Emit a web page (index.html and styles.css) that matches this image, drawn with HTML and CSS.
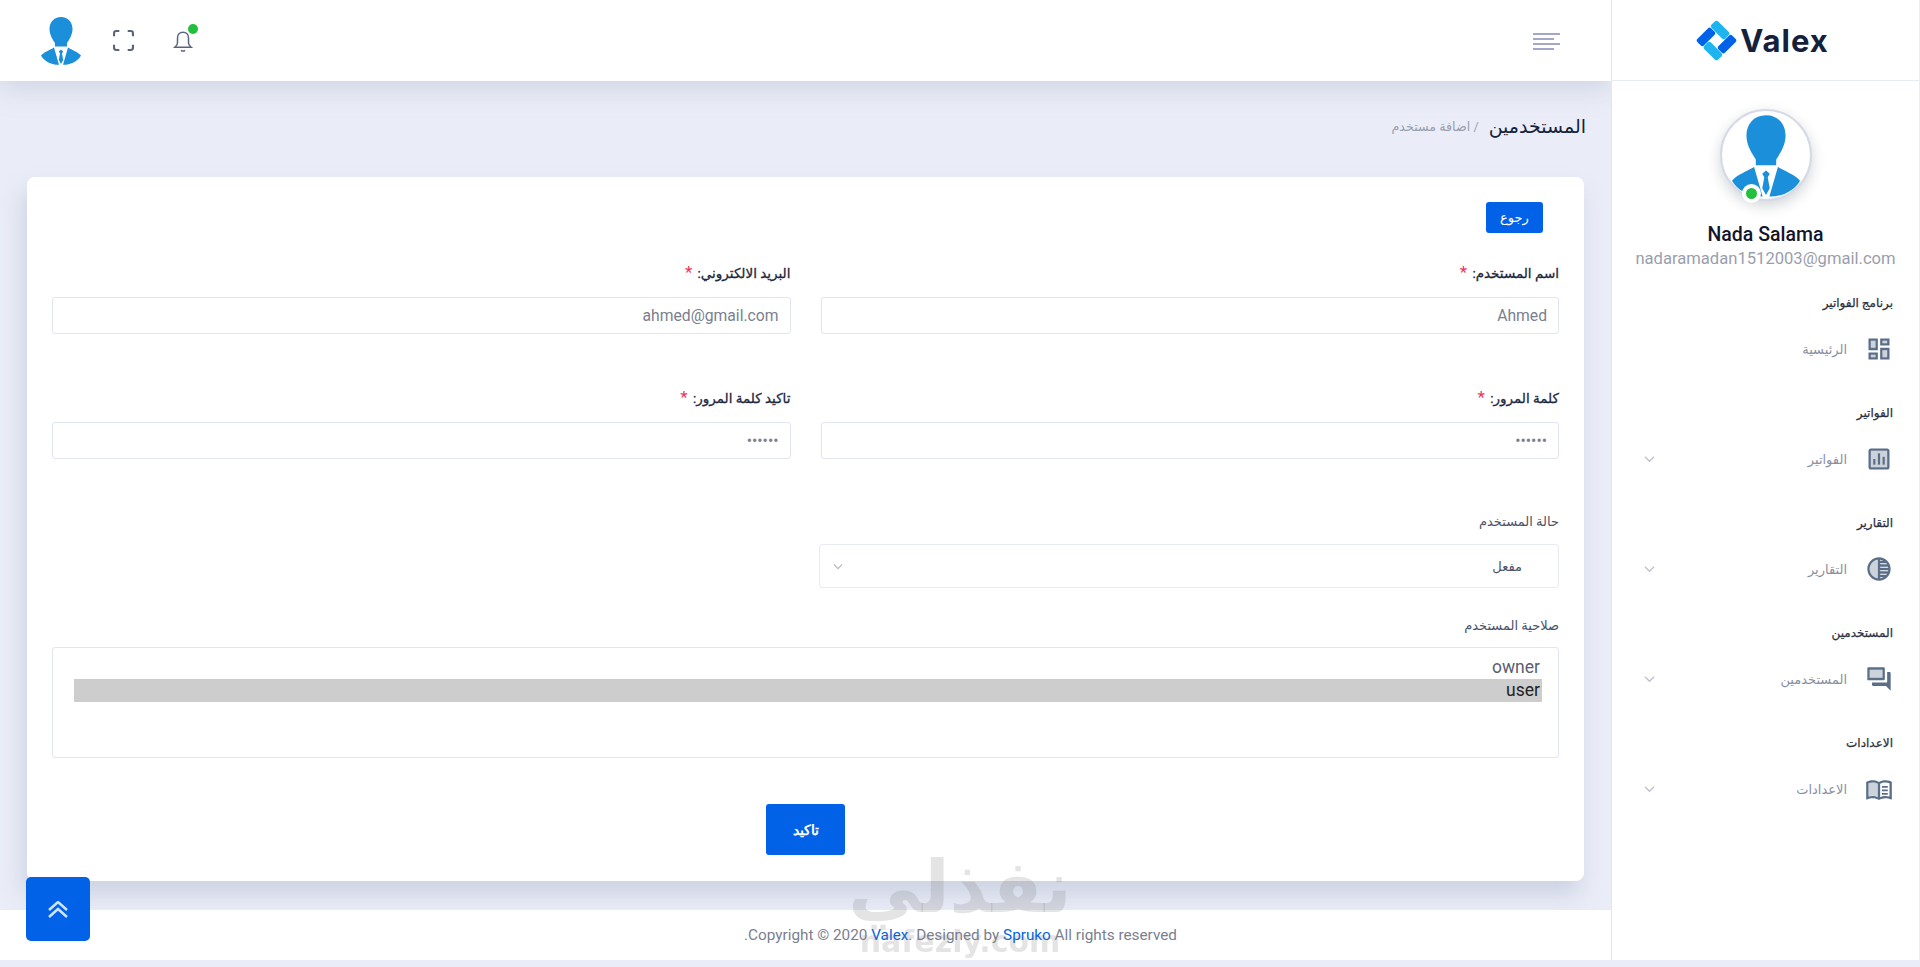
FILE: index.html
```html
<!DOCTYPE html>
<html lang="ar" dir="rtl">
<head>
    <meta charset="UTF-8">
    <title>اضافة مستخدم</title>
    <link rel="stylesheet" href="styles.css">
</head>
<body>
    <svg class="defs" width="0" height="0">
        <symbol id="person" viewBox="0 0 40 48">
            <path d="M20 0C27 0 31.5 5 31.5 12C31.5 18 28 23 26 26V29.5H14V26C12 23 8.5 18 8.5 12C8.5 5 13 0 20 0Z"/>
            <path d="M0 38.5C3 35 9 33 13 30.5L18 47.8C10 48 3 44 0 38.5Z"/>
            <path d="M40 38.5C37 35 31 33 27 30.5L22 47.8C30 48 37 44 40 38.5Z"/>
            <path d="M20 32.5L17.8 34.5L19 36.5L17.8 43L20 47L22.2 43L21 36.5L22.2 34.5Z"/>
        </symbol>
    </svg>

    <div class="page">
        <aside class="sidebar">
            <div class="brand">
                <svg class="brand-mark" viewBox="-1 -1 42 42">
                    <g transform="rotate(45 20 20)">
                        <rect fill="#1eb4f0" x="5" y="5" width="20" height="9.5" rx="2.5"/>
                        <rect fill="#0162e8" x="25.5" y="5" width="9.5" height="20" rx="2.5"/>
                        <rect fill="#1eb4f0" x="15" y="25.5" width="20" height="9.5" rx="2.5"/>
                        <rect fill="#0162e8" x="5" y="15" width="9.5" height="20" rx="2.5"/>
                    </g>
                </svg>
                <span class="brand-name">Valex</span>
            </div>

            <div class="profile">
                <div class="profile-pic">
                    <svg class="profile-person"><use href="#person"/></svg>
                    <span class="online-dot"></span>
                </div>
                <h4 class="profile-name">Nada Salama</h4>
                <span class="profile-mail">nadaramadan1512003@gmail.com</span>
            </div>

            <ul class="side-menu">
                <li class="side-cat">برنامج الفواتير</li>
                <li class="side-item">
                    <svg class="side-icon" viewBox="0 0 24 24"><path opacity=".3" d="M5 5h4v6H5zm10 8h4v6h-4zM5 17h4v2H5zM15 5h4v2h-4z"/><path d="M3 13h8V3H3v10zm2-8h4v6H5V5zm8 16h8V11h-8v10zm2-8h4v6h-4v-6zM13 3v6h8V3h-8zm6 4h-4V5h4v2zM3 21h8v-6H3v6zm2-4h4v2H5v-2z"/></svg>
                    <span class="side-label">الرئيسية</span>
                </li>
                <li class="side-cat">الفواتير</li>
                <li class="side-item">
                    <svg class="side-icon" viewBox="0 0 24 24"><path opacity=".3" d="M5 5v14h14V5H5zm4 12H7v-5h2v5zm4 0h-2V7h2v10zm4 0h-2v-7h2v7z"/><path d="M3 5v14c0 1.1.9 2 2 2h14c1.1 0 2-.9 2-2V5c0-1.1-.9-2-2-2H5c-1.1 0-2 .9-2 2zm2 0h14v14H5V5zm2 7h2v5H7zm4-5h2v10h-2zm4 3h2v7h-2z"/></svg>
                    <span class="side-label">الفواتير</span>
                    <svg class="side-arrow" viewBox="0 0 12 8"><path d="M1 1.5L6 6.5L11 1.5"/></svg>
                </li>
                <li class="side-cat">التقارير</li>
                <li class="side-item">
                    <svg class="side-icon" viewBox="0 0 24 24"><path opacity=".3" d="M11 4.07C7.05 4.56 4 7.92 4 12s3.06 7.44 7 7.93z"/><path d="M12 2C6.48 2 2 6.48 2 12s4.48 10 10 10 10-4.48 10-10S17.52 2 12 2zm-1 17.93c-3.94-.49-7-3.85-7-7.93s3.05-7.44 7-7.93v15.86zm2-15.86c1.03.13 2 .45 2.87.93H13v-.93zM13 7h5.24c.25.31.48.65.68 1H13V7zm0 3h6.74c.08.33.15.66.19 1H13v-1zm0 9.93V19h2.87c-.87.48-1.84.8-2.87.93zM18.24 17H13v-1h5.92c-.2.35-.43.69-.68 1zm1.5-3H13v-1h6.93c-.04.34-.11.67-.19 1z"/></svg>
                    <span class="side-label">التقارير</span>
                    <svg class="side-arrow" viewBox="0 0 12 8"><path d="M1 1.5L6 6.5L11 1.5"/></svg>
                </li>
                <li class="side-cat">المستخدمين</li>
                <li class="side-item">
                    <svg class="side-icon" viewBox="0 0 24 24"><path opacity=".3" d="M15 11V4H4v7z"/><path d="M21 6h-2v9H6v2c0 .55.45 1 1 1h11l4 4V7c0-.55-.45-1-1-1zm-5 7c.55 0 1-.45 1-1V3c0-.55-.45-1-1-1H3c-.55 0-1 .45-1 1v10h13zM4 11V4h11v7z"/></svg>
                    <span class="side-label">المستخدمين</span>
                    <svg class="side-arrow" viewBox="0 0 12 8"><path d="M1 1.5L6 6.5L11 1.5"/></svg>
                </li>
                <li class="side-cat">الاعدادات</li>
                <li class="side-item">
                    <svg class="side-icon" viewBox="0 0 24 24"><path opacity=".3" d="M11 7.5C9.5 6.7 7.7 6.3 6 6.3c-1.1 0-2.1.1-3 .5v11.5c.9-.3 1.9-.5 3-.5 1.7 0 3.5.4 5 1.2z"/><path d="M21 5c-1.11-.35-2.33-.5-3.5-.5-1.95 0-4.05.4-5.5 1.5-1.45-1.1-3.55-1.5-5.5-1.5S2.45 4.9 1 6v14.65c0 .25.25.5.5.5.1 0 .15-.05.25-.05C3.1 20.45 5.05 20 6.5 20c1.95 0 4.05.4 5.5 1.5 1.35-.85 3.8-1.5 5.5-1.5 1.65 0 3.35.3 4.75 1.05.1.05.15.05.25.05.25 0 .5-.25.5-.5V6c-.6-.45-1.25-.75-2-1zM11 19c-1.3-.6-3-1-4.5-1-1.2 0-2.4.15-3.5.5V7c1.1-.35 2.3-.5 3.5-.5 1.5 0 3.2.4 4.5 1zm10-.5c-1.1-.35-2.3-.5-3.5-.5-1.7 0-3.3.4-4.5 1V7.5c1.2-.6 2.8-1 4.5-1 1.2 0 2.4.15 3.5.5v11.5zM14.5 9.5h5V11h-5zm0 3h5V14h-5zm0 3h5V17h-5z"/></svg>
                    <span class="side-label">الاعدادات</span>
                    <svg class="side-arrow" viewBox="0 0 12 8"><path d="M1 1.5L6 6.5L11 1.5"/></svg>
                </li>
            </ul>
        </aside>

        <div class="main">
            <header class="topbar">
                <button class="menu-toggle" aria-label="menu">
                    <span class="bar bar-long"></span>
                    <span class="bar bar-mid"></span>
                    <span class="bar bar-long"></span>
                    <span class="bar bar-mid"></span>
                </button>
                <div class="top-actions">
                    <span class="bell">
                        <svg viewBox="0 0 24 24"><path d="M12 3.2C8.7 3.2 6.5 5.7 6.5 9V14C6.5 16 5.2 17 3.8 18.2H20.2C18.8 17 17.5 16 17.5 14V9C17.5 5.7 15.3 3.2 12 3.2Z"/><path d="M10 21.3C11 22.1 13 22.1 14 21.3"/></svg>
                        <span class="bell-dot"></span>
                    </span>
                    <svg class="fullscreen" viewBox="0 0 20 20"><path d="M1 6V3C1 1.9 1.9 1 3 1H6M14 1H17C18.1 1 19 1.9 19 3V6M19 14V17C19 18.1 18.1 19 17 19H14M6 19H3C1.9 19 1 18.1 1 17V14"/></svg>
                    <svg class="top-person"><use href="#person"/></svg>
                </div>
            </header>

            <div class="content">
                <div class="breadcrumb">
                    <h4 class="crumb-title">المستخدمين</h4>
                    <span class="crumb-sub">/ اضافة مستخدم</span>
                </div>

                <div class="card">
                    <a class="btn btn-back" href="#">رجوع</a>
                    <form class="user-form">
                        <div class="form-row">
                            <div class="field">
                                <label>اسم المستخدم: <span class="req">*</span></label>
                                <input type="text" value="Ahmed">
                            </div>
                            <div class="field">
                                <label>البريد الالكتروني: <span class="req">*</span></label>
                                <input type="text" value="ahmed@gmail.com">
                            </div>
                        </div>
                        <div class="form-row">
                            <div class="field">
                                <label>كلمة المرور: <span class="req">*</span></label>
                                <input type="password" value="123456">
                            </div>
                            <div class="field">
                                <label>تاكيد كلمة المرور: <span class="req">*</span></label>
                                <input type="password" value="123456">
                            </div>
                        </div>
                        <div class="form-row">
                            <div class="field">
                                <label class="plain-label">حالة المستخدم</label>
                                <div class="select-box">
                                    <span>مفعل</span>
                                    <svg class="select-arrow" viewBox="0 0 12 8"><path d="M1 1.5L6 6.5L11 1.5"/></svg>
                                </div>
                            </div>
                            <div class="field"></div>
                        </div>
                        <div class="role-field">
                            <label class="plain-label">صلاحية المستخدم</label>
                            <div class="role-list">
                                <div class="role-option">owner</div>
                                <div class="role-option role-selected">user</div>
                            </div>
                        </div>
                        <div class="form-actions">
                            <button class="btn btn-confirm" type="button">تاكيد</button>
                        </div>
                    </form>
                </div>
            </div>

            <footer class="footer">
                <span dir="ltr">.Copyright © 2020 <a href="#">Valex</a>. Designed by <a href="#">Spruko</a> All rights reserved</span>
            </footer>
        </div>
    </div>

    <a class="back-top" href="#">
        <svg viewBox="0 0 20 17"><path d="M1 9L10 1L19 9M1 16L10 8L19 16"/></svg>
    </a>

    <div class="watermark">
        <span class="mark-ar">نفذلي</span>
        <span class="mark-en">nafezly.com</span>
    </div>
</body>
</html>
```

FILE: styles.css
```css
* { box-sizing: border-box; }
html, body { margin: 0; height: 100%; }
body { background: #eaedf7; font-family: Roboto, "Liberation Sans", "DejaVu Sans", sans-serif; color: #1c273c; overflow: hidden; }
ul { list-style: none; margin: 0; padding: 0; }
a { text-decoration: none; color: #0162e8; }
.defs { position: absolute; }

.page { display: flex; height: 960px; }

/* sidebar */
.sidebar { width: 308px; margin-right: 1px; background: #fff; border-left: 1px solid #e3e6f0; flex: none; position: relative; z-index: 3; }
.brand { height: 81px; border-bottom: 1px solid #e8ebf3; display: flex; align-items: center; justify-content: center; gap: 3px; direction: ltr; padding-right: 6px; }
.brand-mark { width: 41px; height: 41px; }
.brand-name { font-family: Inter, sans-serif; font-weight: 700; font-size: 31px; color: #14213d; letter-spacing: 1px; }

.profile { display: flex; flex-direction: column; align-items: center; padding-top: 28px; }
.profile-pic { width: 92px; height: 92px; border-radius: 50%; background: #fff; border: 2px solid #d5d9e8; box-shadow: 0 5px 14px rgba(28, 39, 60, .2); position: relative; display: flex; justify-content: center; }
.profile-person { width: 68px; height: 82px; fill: #1b8fd9; margin-top: 4px; }
.online-dot { position: absolute; width: 19px; height: 19px; bottom: -4px; left: 20px; background: #22c03c; border: 4px solid #fff; border-radius: 50%; }
.profile-name { margin: 23px 0 0; font-size: 19.5px; line-height: 22px; font-weight: 500; color: #14142b; }
.profile-mail { margin-top: 3px; font-size: 16.6px; line-height: 20px; color: #9a9eae; }

.side-menu { padding: 0 26px 0 32px; margin-top: 26px; }
.side-cat { font-size: 12px; line-height: 16px; color: #2c2f3c; -webkit-text-stroke: .25px #2c2f3c; }
.side-item { height: 94px; display: flex; align-items: center; padding-bottom: 18px; }
.side-icon { width: 28px; height: 28px; fill: #5b6e88; margin-left: 18px; }
.side-label { font-size: 13px; color: #8a8f9f; flex: 1; }
.side-arrow { width: 11px; height: 8px; fill: none; stroke: #bfc3cf; stroke-width: 1.5; }

/* top bar */
.main { flex: 1; min-width: 0; display: flex; flex-direction: column; }
.topbar { height: 81px; flex: none; background: #fff; display: flex; align-items: center; justify-content: space-between; padding: 0 51px 0 41px; box-shadow: 0 8px 24px rgba(160, 170, 195, .35); position: relative; z-index: 2; }
.menu-toggle { border: 0; background: none; padding: 0; width: 27px; margin-top: 2px; display: flex; flex-direction: column; gap: 2.5px; align-items: flex-end; }
.bar { height: 2.5px; background: #a3a7c9; display: block; }
.bar-long { width: 27px; }
.bar-mid { width: 21px; }
.top-actions { display: flex; align-items: center; gap: 32px; }
.top-person { width: 40px; height: 48px; fill: #1b8fd9; }
.fullscreen { width: 21px; height: 21px; fill: none; stroke: #5b6478; stroke-width: 2; }
.bell { position: relative; width: 24px; height: 24px; margin-left: 5px; }
.bell svg { width: 24px; height: 24px; fill: none; stroke: #5b6478; stroke-width: 1.5; }
.bell-dot { position: absolute; width: 10px; height: 10px; background: #22c03c; border-radius: 50%; top: -5px; left: 17px; }

/* content */
.content { flex: 1; padding: 30px 27px 0 27px; }
.breadcrumb { display: flex; align-items: center; gap: 10px; height: 30px; margin-bottom: 36px; margin-right: -2px; }
.crumb-title { margin: 0; font-size: 19px; font-weight: 400; color: #14213d; }
.crumb-sub { font-size: 12.7px; color: #9a9eae; }

.card { height: 704px; background: #fff; border-radius: 8px; box-shadow: -4px 14px 22px rgba(195, 202, 220, .75); padding: 25px 25px 0; }
.btn { display: inline-flex; align-items: center; justify-content: center; background: #0162e8; color: #fff; border: 0; border-radius: 3px; }
.btn-back { width: 57px; height: 31px; font-size: 13px; margin-right: 16px; }
.form-row { display: flex; gap: 30px; margin-top: 30px; }
.form-row + .form-row { margin-top: 54px; }
.field { flex: 1; min-width: 0; }
.field label, .role-field label { display: block; font-size: 13.5px; line-height: 18px; color: #1c273c; margin-bottom: 15px; -webkit-text-stroke: .3px #1c273c; }
.field label.plain-label, .role-field label.plain-label { font-size: 13px; color: #4a5268; margin-bottom: 13px; -webkit-text-stroke: 0; }
.req { color: #ee335e; font-size: 17px; margin-right: 2px; -webkit-text-stroke: 0; }
input { width: 100%; height: 37px; border: 1px solid #e1e5ef; border-radius: 3px; background: #fff; padding: 0 11px; font: 15.7px Roboto, sans-serif; color: #7a7f90; outline: 0; }
.select-box { height: 44px; border: 1px solid #e9ebf3; border-radius: 3px; display: flex; align-items: center; justify-content: space-between; padding-right: 36px; margin-left: -2px; font-size: 13px; color: #4a5268; }
.select-arrow { width: 10px; height: 7px; fill: none; stroke: #b5b9c6; stroke-width: 1.5; margin-left: 13px; }
.role-field { margin-top: 29px; }
.role-field label.plain-label { margin-bottom: 12px; }
.role-list { height: 111px; border: 1px solid #e1e5ef; border-radius: 3px; padding: 8px 16px 0 21px; font-size: 17.5px; line-height: 23px; color: #5a6072; }
.role-selected { background: #cdcdcd; color: #222; }
.role-option { padding-right: 2px; }
.form-actions { display: flex; justify-content: center; margin-top: 46px; }
.btn-confirm { width: 79px; height: 51px; font-size: 14px; font-weight: 700; }

/* footer */
.footer { height: 51px; flex: none; background: #fff; display: flex; align-items: center; justify-content: center; padding-left: 310px; font-size: 15.3px; color: #7a7f90; border-top: 1px solid #e8ebf3; }

.back-top { position: fixed; left: 26px; bottom: 26px; width: 64px; height: 64px; border-radius: 5px; background: #0162e8; display: flex; align-items: center; justify-content: center; z-index: 5; }
.back-top svg { width: 20px; height: 17px; fill: none; stroke: #cfe4ff; stroke-width: 2.5; }

.watermark { position: fixed; left: 835px; top: 850px; width: 250px; display: flex; flex-direction: column; align-items: center; color: rgba(120, 120, 120, .2); pointer-events: none; z-index: 6; }
.mark-ar { font-family: "DejaVu Sans", sans-serif; font-size: 73px; font-weight: 700; line-height: 74px; }
.mark-en { font-family: "DejaVu Sans", sans-serif; font-size: 30px; font-weight: 700; line-height: 36px; }
```
